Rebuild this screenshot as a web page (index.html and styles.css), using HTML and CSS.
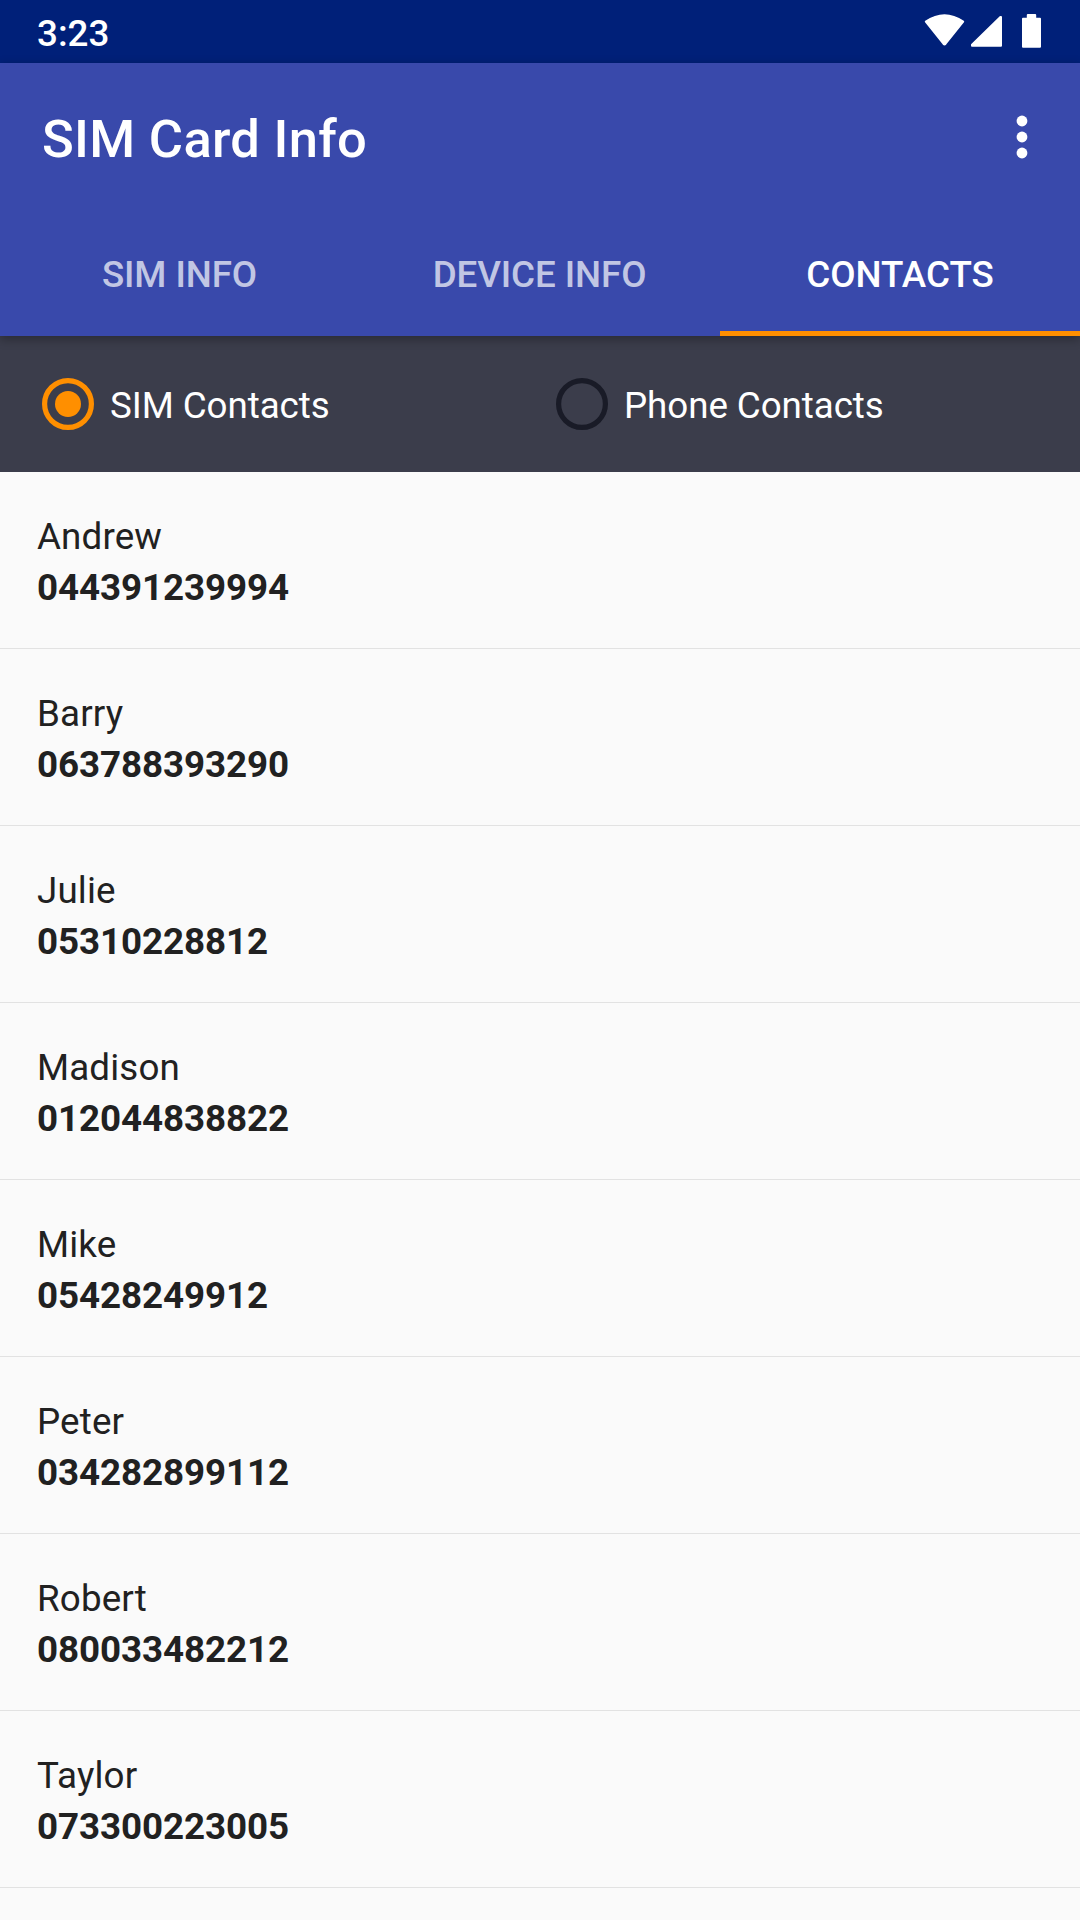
FILE: index.html
```html
<!DOCTYPE html>
<html lang="en">
<head>
<meta charset="utf-8">
<title>SIM Card Info</title>
<link rel="stylesheet" href="styles.css">
</head>
<body>
<div class="status-bar">
  <span class="clock">3:23</span>
  <svg class="status-icons" width="120" height="63" viewBox="0 0 120 63" fill="#fff" stroke="#fff" stroke-width="2" stroke-linejoin="round">
    <path d="M5.8 21.6Q24.5 8.8 43.2 21.6L25.4 44Q24.5 45 23.6 44Z"/>
    <path d="M52 45.8V44.6L80.4 17H81V45.8Z"/>
    <path d="M107.8 15H115.2V18.8H120V46.8H103V18.8H107.8Z"/>
  </svg>
</div>
<header class="app-header">
  <div class="toolbar">
    <h1 class="title">SIM Card Info</h1>
    <svg class="overflow" width="12" height="44" viewBox="0 0 12 44" fill="#fff">
      <circle cx="6" cy="6" r="5.4"/><circle cx="6" cy="22" r="5.4"/><circle cx="6" cy="38" r="5.4"/>
    </svg>
  </div>
  <nav class="tabs">
    <span class="tab">SIM INFO</span>
    <span class="tab">DEVICE INFO</span>
    <span class="tab active">CONTACTS</span>
  </nav>
</header>
<div class="sources">
  <div class="source">
    <svg class="radio selected" width="52" height="52" viewBox="0 0 52 52"><circle class="ring" cx="26" cy="26" r="23.4"/><circle class="dot" cx="26" cy="26" r="13"/></svg>
    <span>SIM Contacts</span>
  </div>
  <div class="source">
    <svg class="radio" width="52" height="52" viewBox="0 0 52 52"><circle class="ring" cx="26" cy="26" r="23.4"/></svg>
    <span>Phone Contacts</span>
  </div>
</div>
<ul class="contacts">
  <li class="contact"><span>Andrew</span><strong>044391239994</strong></li>
  <li class="contact"><span>Barry</span><strong>063788393290</strong></li>
  <li class="contact"><span>Julie</span><strong>05310228812</strong></li>
  <li class="contact"><span>Madison</span><strong>012044838822</strong></li>
  <li class="contact"><span>Mike</span><strong>05428249912</strong></li>
  <li class="contact"><span>Peter</span><strong>034282899112</strong></li>
  <li class="contact"><span>Robert</span><strong>080033482212</strong></li>
  <li class="contact"><span>Taylor</span><strong>073300223005</strong></li>
</ul>
</body>
</html>
```
FILE: styles.css
```css
* {
  box-sizing: border-box;
}

body {
  margin: 0;
  height: 1920px;
  overflow: hidden;
  background: #fafafa;
  color: #212121;
  font: 400 36.75px/51px Roboto, sans-serif;
}

.status-bar {
  display: flex;
  justify-content: space-between;
  height: 63px;
  padding: 0 40px 0 37px;
  background: #002079;
  color: #fff;
}

.clock {
  padding-top: 8px;
  font-weight: 500;
}

.status-icons {
  overflow: visible;
}

.app-header {
  position: relative;
  height: 273px;
  background: #3949ab;
  color: #fff;
  box-shadow: 0 3px 10px rgba(0, 0, 0, 0.32);
}

.toolbar {
  display: flex;
  align-items: center;
  justify-content: space-between;
  height: 147px;
  padding: 0 52px 0 42px;
}

.title {
  margin: 0;
  padding-top: 4px;
  font-size: 52.5px;
  line-height: 62px;
  font-weight: 500;
  letter-spacing: 0.3px;
}

.tabs {
  display: grid;
  grid-template-columns: repeat(3, 1fr);
  height: 126px;
}

.tab {
  padding-top: 39px;
  padding-right: 1px;
  text-align: center;
  font-weight: 500;
  letter-spacing: -0.1px;
  color: rgba(255, 255, 255, 0.7);
}

.tab.active {
  padding-right: 0;
  letter-spacing: 0;
  color: #fff;
  border-bottom: 5px solid #ff8f00;
}

.sources {
  display: grid;
  grid-template-columns: 514px 1fr;
  height: 136px;
  padding-left: 42px;
  background: #3b3d4b;
  color: #fff;
}

.source {
  display: flex;
  align-items: center;
  gap: 16px;
}

.source span {
  padding-top: 3px;
  letter-spacing: -0.07px;
}

.ring {
  fill: none;
  stroke: #191b27;
  stroke-width: 5.2;
}

.selected .ring {
  stroke: #ff8f00;
}

.dot {
  fill: #ff8f00;
}

.contacts {
  margin: 0;
  padding: 0;
  list-style: none;
}

.contact {
  display: flex;
  flex-direction: column;
  height: 177px;
  padding: 39px 37px 0;
  border-bottom: 1px solid #e2e2e2;
}

.contact span {
  letter-spacing: 0.15px;
}

.contact strong {
  font-weight: 700;
  letter-spacing: -0.09px;
}
```
